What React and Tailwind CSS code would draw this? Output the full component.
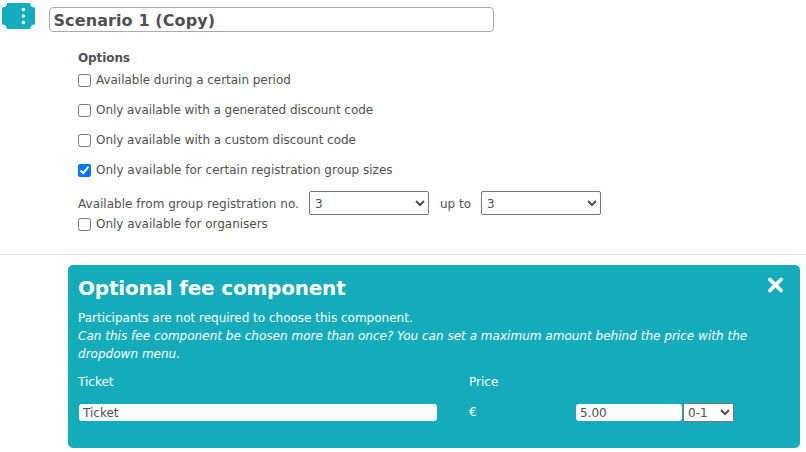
import { useState } from 'react'

function Option({ label, checked, onChange, className }) {
  return (
    <label className="flex h-[18px] items-center gap-[5px]">
      <input type="checkbox" checked={checked} onChange={onChange} className="h-[13px] w-[13px]" />
      <span className={className}>{label}</span>
    </label>
  )
}

function SizeSelect({ value, onChange }) {
  return (
    <select
      value={value}
      onChange={(e) => onChange(e.target.value)}
      className="h-6 w-[120px] rounded-[2px] border border-[#767676] bg-white px-px pt-px text-[#505050]"
    >
      {['1', '2', '3', '4', '5'].map((n) => (
        <option key={n}>{n}</option>
      ))}
    </select>
  )
}

export default function App() {
  const [title, setTitle] = useState('Scenario 1 (Copy)')
  const [options, setOptions] = useState({ period: false, generated: false, custom: false, group: true, organisers: false })
  const [from, setFrom] = useState('3')
  const [to, setTo] = useState('3')
  const [ticket, setTicket] = useState('Ticket')
  const [price, setPrice] = useState('5.00')
  const [amount, setAmount] = useState('0-1')

  const toggle = (key) => () => setOptions((prev) => ({ ...prev, [key]: !prev[key] }))

  return (
    <div className="h-[452px] w-[806px] overflow-hidden bg-white font-['DejaVu_Sans',sans-serif] text-[12px] leading-[18px] text-[#505050]">
      {/* Scenario header */}
      <div className="flex h-[48px] items-start">
        <button className="mt-[3px] ml-[2px] h-[26px] w-[33px]" aria-label="Scenario menu">
          <svg width="33" height="26" viewBox="0 0 33 26" className="block">
            <path d="M5 0H28A5 5 0 0 0 33 4.5V21.5A5 5 0 0 0 28 26H5A5 5 0 0 0 0 21.5V4.5A5 5 0 0 0 5 0Z" fill="#14acba" />
            <circle cx="21.4" cy="6.5" r="1.7" fill="#fff" />
            <circle cx="21.4" cy="13" r="1.7" fill="#fff" />
            <circle cx="21.4" cy="19.5" r="1.7" fill="#fff" />
          </svg>
        </button>
        <input
          value={title}
          onChange={(e) => setTitle(e.target.value)}
          className="mt-[7px] ml-[14px] h-[25px] w-[445px] rounded-[4px] border border-[#aaa] px-[3.5px] pt-[2px] text-[16px] font-bold tracking-[0.1px]"
        />
      </div>

      {/* Options */}
      <div className="ml-[78px]">
        <h3 className="h-[23px] font-bold leading-[20px] tracking-[-0.1px]">Options</h3>
        <div className="flex flex-col gap-3">
          <Option label="Available during a certain period" checked={options.period} onChange={toggle('period')} className="tracking-[-0.03px]" />
          <Option label="Only available with a generated discount code" checked={options.generated} onChange={toggle('generated')} className="tracking-[-0.05px]" />
          <Option label="Only available with a custom discount code" checked={options.custom} onChange={toggle('custom')} className="tracking-[-0.04px]" />
          <Option label="Only available for certain registration group sizes" checked={options.group} onChange={toggle('group')} />
        </div>
        <div className="mt-3 flex h-6 items-center">
          <span className="w-[231px] pt-px tracking-[0.02px]">Available from group registration no.</span>
          <SizeSelect value={from} onChange={setFrom} />
          <span className="w-[52px] pt-px pl-[11px]">up to</span>
          <SizeSelect value={to} onChange={setTo} />
        </div>
        <Option label="Only available for organisers" checked={options.organisers} onChange={toggle('organisers')} className="tracking-[-0.02px]" />
      </div>

      <hr className="mt-[21px] border-t border-[#e3e3e3]" />

      {/* Fee component */}
      <div className="mt-[10px] ml-[68px] h-[183px] w-[732px] rounded-[5px] bg-[#14acba] px-[10px] pt-[10px] text-white">
        <div className="flex items-start justify-between">
          <h2 className="text-[20px] font-bold leading-[26px] tracking-[-0.2px]">Optional fee component</h2>
          <button className="mt-[2px] mr-[6px]" aria-label="Close">
            <svg width="17" height="17" viewBox="0 0 17 17" className="block">
              <path d="M2.9 2.4L14.1 13.6M14.1 2.4L2.9 13.6" stroke="#fff" strokeWidth="3.6" strokeLinecap="round" />
            </svg>
          </button>
        </div>
        <p className="mt-[8px]">Participants are not required to choose this component.</p>
        <p className="w-[690px] italic tracking-[0.02px]">
          Can this fee component be chosen more than once? You can set a maximum amount behind the price with the
          dropdown menu.
        </p>
        <div className="mt-[10px] flex">
          <span className="w-[391px]">Ticket</span>
          <span>Price</span>
        </div>
        <div className="mt-[12px] flex h-[19px] items-center">
          <input
            value={ticket}
            onChange={(e) => setTicket(e.target.value)}
            className="ml-px h-[17px] w-[358px] rounded-[3px] bg-white px-1 text-[#505050]"
          />
          <span className="-mt-[2px] ml-[32px] w-[107px]">€</span>
          <input
            value={price}
            onChange={(e) => setPrice(e.target.value)}
            className="h-[17px] w-[106px] rounded-[3px] bg-white px-1 text-[#505050]"
          />
          <select
            value={amount}
            onChange={(e) => setAmount(e.target.value)}
            className="ml-px h-[19px] w-[51px] border border-[#767676] bg-white pr-px text-[#505050]"
          >
            <option>0-1</option>
            <option>0-2</option>
            <option>0-3</option>
          </select>
        </div>
      </div>
    </div>
  )
}
